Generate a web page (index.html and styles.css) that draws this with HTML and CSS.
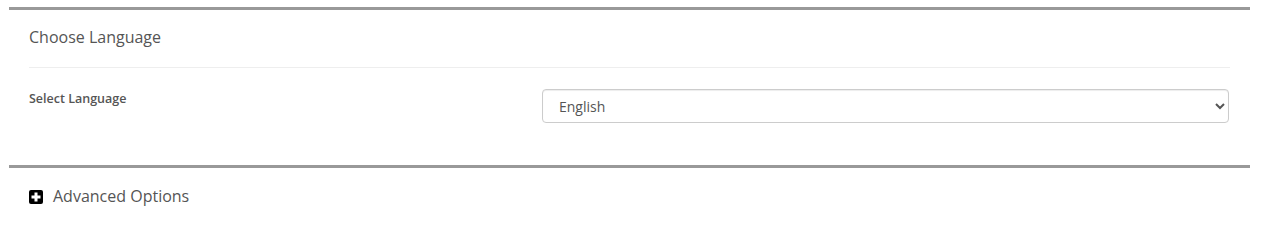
FILE: index.html
```html
<!DOCTYPE html>
<html lang="en">
<head>
    <meta charset="UTF-8">
    <meta name="viewport" content="width=device-width, initial-scale=1.0">
    <title>Language Settings</title>
    <link rel="stylesheet" href="styles.css">
</head>
<body>
    <div class="box">
        <div class="box-header">
            <h3 class="box-title">Choose Language</h3>
        </div>
        <div class="box-body">
            <div class="form-row">
                <label for="language" class="form-label">Select Language</label>
                <select id="language" class="form-control">
                    <option>English</option>
                    <option>French</option>
                    <option>German</option>
                </select>
            </div>
        </div>
    </div>

    <div class="box">
        <div class="box-toggle">
            <svg class="toggle-icon" width="14" height="14" viewBox="0 0 14 14">
                <rect x="0" y="0" width="14" height="14" rx="2" fill="#000"/>
                <rect x="5.5" y="2.5" width="3" height="9" fill="#fff"/>
                <rect x="2.5" y="5.5" width="9" height="3" fill="#fff"/>
            </svg>
            <span>Advanced Options</span>
        </div>
    </div>
</body>
</html>
```

FILE: styles.css
```css
html{
    font-family: "Open Sans", sans-serif;
}

body{
    margin: 7px 11px 0 9px;
    background-color: white;
    color: #555;
}

.box{
    border-top: 3px solid #999;
    padding: 0 20px;
}

.box-header{
    padding: 16px 0 18px;
    border-bottom: 1px solid #eee;
}

.box-title{
    margin: 0;
    font-size: 16px;
    font-weight: 400;
    line-height: 23px;
    color: #555;
}

.box-body{
    padding: 21px 0 42px;
}

.form-row{
    display: grid;
    grid-template-columns: 513px 1fr;
    margin-right: 1px;
}

.form-label{
    font-size: 12.5px;
    font-weight: 600;
    color: #555;
    line-height: 20px;
}

.form-control{
    height: 34px;
    width: 100%;
    padding: 6px 12px;
    font-family: "Open Sans", sans-serif;
    font-size: 14px;
    color: #555;
    background-color: white;
    border: 1px solid #ccc;
    border-radius: 4px;
    box-shadow: inset 0 1px 1px rgba(0, 0, 0, .075);
}

.box-toggle{
    display: flex;
    align-items: center;
    gap: 10px;
    padding: 17px 0 15px;
    font-size: 16px;
    line-height: 23px;
}

.toggle-icon{
    display: block;
}
```
